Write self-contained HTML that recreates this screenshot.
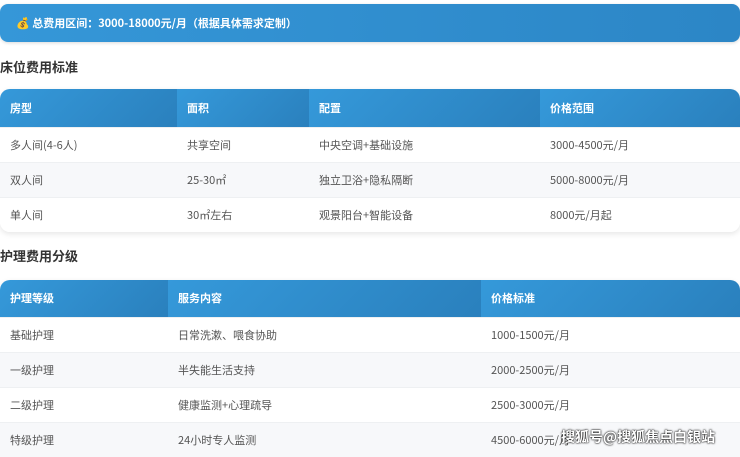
<!DOCTYPE html>
<html><head><meta charset="utf-8"><style>
*{margin:0;padding:0;box-sizing:border-box}
body{width:740px;height:453px;overflow:hidden;background:#fff;font-family:"Noto Sans CJK SC","Liberation Sans",sans-serif;font-size:11px;color:#444}
.banner{position:absolute;left:0;top:4px;width:740px;height:38px;border-radius:8px;background:linear-gradient(90deg,#3597d8,#2c86c6);color:#fff;font-weight:bold;font-size:11px;line-height:38px;padding-left:16px;box-shadow:0 1px 3px rgba(0,0,0,.15)}
.h{position:absolute;left:0;font-weight:bold;font-size:13px;color:#333;line-height:18px}
table{position:absolute;left:0;width:740px;border-collapse:collapse;border-radius:10px;overflow:hidden;box-shadow:0 2px 6px rgba(0,0,0,.1);table-layout:fixed}
th{background:linear-gradient(135deg,#3599da,#2a80bd);color:#fff;font-weight:bold;text-align:left;padding:0 0 0 10px;height:38px;font-size:11px;line-height:14px}
td{padding:0 0 0 10px;height:35px;color:#555;font-size:11px;line-height:14px}
tbody tr td{border-top:1px solid #eef0f2}
</style></head><body>
<div class="banner">💰 总费用区间：3000-18000元/月（根据具体需求定制）</div>
<div class="h" style="top:58px">床位费用标准</div>
<table style="top:89px">
<colgroup><col style="width:177px"><col style="width:132px"><col style="width:231px"><col style="width:200px"></colgroup>
<thead><tr><th>房型</th><th>面积</th><th>配置</th><th>价格范围</th></tr></thead>
<tbody>
<tr><td style="background:#fff">多人间(4-6人)</td><td style="background:#fff">共享空间</td><td style="background:#fff">中央空调+基础设施</td><td style="background:#fff">3000-4500元/月</td></tr>
<tr><td style="background:#f7f8fa">双人间</td><td style="background:#f7f8fa">25-30㎡</td><td style="background:#f7f8fa">独立卫浴+隐私隔断</td><td style="background:#f7f8fa">5000-8000元/月</td></tr>
<tr><td style="background:#fff">单人间</td><td style="background:#fff">30㎡左右</td><td style="background:#fff">观景阳台+智能设备</td><td style="background:#fff">8000元/月起</td></tr>
</tbody></table>
<div class="h" style="top:247px">护理费用分级</div>
<table style="top:280px;border-bottom-left-radius:0;border-bottom-right-radius:0">
<colgroup><col style="width:168px"><col style="width:313px"><col style="width:259px"></colgroup>
<thead><tr><th style="height:37px">护理等级</th><th style="height:37px">服务内容</th><th style="height:37px">价格标准</th></tr></thead>
<tbody>
<tr><td style="background:#fff">基础护理</td><td style="background:#fff">日常洗漱、喂食协助</td><td style="background:#fff">1000-1500元/月</td></tr>
<tr><td style="background:#f7f8fa">一级护理</td><td style="background:#f7f8fa">半失能生活支持</td><td style="background:#f7f8fa">2000-2500元/月</td></tr>
<tr><td style="background:#fff">二级护理</td><td style="background:#fff">健康监测+心理疏导</td><td style="background:#fff">2500-3000元/月</td></tr>
<tr><td style="background:#f7f8fa">特级护理</td><td style="background:#f7f8fa">24小时专人监测</td><td style="background:#f7f8fa">4500-6000元/月</td></tr>
</tbody></table>
<div style="position:absolute;left:561px;top:427px;color:#fff;font-size:14px;font-weight:bold;line-height:20px;text-shadow:0 0 2px #000,0 0 1px #000">搜狐号@搜狐焦点白银站</div>
</body></html>
